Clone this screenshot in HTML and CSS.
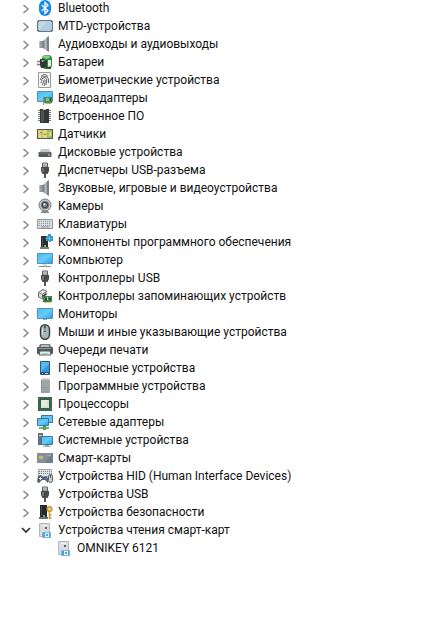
FILE: index.html
```html
<!DOCTYPE html>
<html lang="ru">
<head>
<meta charset="utf-8">
<meta name="viewport" content="width=device-width, initial-scale=1">
<title>Диспетчер устройств</title>
<link rel="stylesheet" href="styles.css">
</head>
<body>
<svg class="defs" aria-hidden="true">
  <defs>
    <linearGradient id="sky" x1="0" y1="0" x2="1" y2="1"><stop offset="0" stop-color="#4fb8ee"/><stop offset=".5" stop-color="#67cbfa"/><stop offset="1" stop-color="#2f9fe2"/></linearGradient>
    <linearGradient id="metal" x1="0" y1="0" x2="1" y2="0"><stop offset="0" stop-color="#666b6e"/><stop offset=".45" stop-color="#b9bdbf"/><stop offset="1" stop-color="#8b9094"/></linearGradient>
    <symbol id="closed" viewBox="0 0 8 12"><path d="M1.500 2l4.500 4-4.500 4" fill="none" stroke="#8b8b8b" stroke-width="1.600"/></symbol>
    <symbol id="open" viewBox="0 0 10 8"><path d="M1 2l4 4 4-4" fill="none" stroke="#333" stroke-width="1.700"/></symbol>
    <symbol id="speaker" viewBox="0 0 16 16"><path d="M2.500 5H6v7H2.500z" fill="#85898d"/><path d="M6 5l5-4.500v15L6 12z" fill="url(#metal)"/><path d="M10 1.500L12 0v16l-2-1.500z" fill="#7c8185"/><path d="M4 5.500v6" stroke="#b5b8ba"/></symbol>
    <symbol id="usb" viewBox="0 0 16 16"><path d="M5.500 1h5v4h-5z" fill="#dedede" stroke="#606060"/><path d="M7 2.500v1m2-1v1" stroke="#444"/><path d="M4 5h8v4l-1.500 3h-5L4 9z" fill="#47494b"/><path d="M5 6h2v4H5z" fill="#707375"/><path d="M7 11h2v5H7z" fill="#555"/></symbol>
    <symbol id="reader" viewBox="0 0 16 16"><path d="M2.500 1.500h10v13h-10z" fill="#d9dde0" stroke="#b2b8bc"/><path d="M5 3.500h5" stroke="#f2f4f5"/><path d="M8 5h2v2H8z" fill="#59636a"/><path d="M5.500 10.500h8v5h-8z" fill="#4b9fda" stroke="#78b7e2"/><path d="M8 11h4v4H8z" fill="#eef7fc"/><path d="M9 12h2v2H9z" fill="#4b9fda"/></symbol>
  </defs>
</svg>
<main>
<ul class="tree">
  <li><div class="row"><button class="toggle" aria-label="Развернуть"><svg class="chevron"><use href="#closed"/></svg></button><svg class="icon" viewBox="0 0 16 16"><rect x="2" y="0" width="12" height="16" rx="6" fill="#1689e7"/><path d="M4.700 5l6.300 5.700L8 13.500v-11L11 5.300 4.700 11" fill="none" stroke="#fff" stroke-width="1.300"/></svg><span>Bluetooth</span></div></li>
  <li><div class="row"><button class="toggle" aria-label="Развернуть"><svg class="chevron"><use href="#closed"/></svg></button><svg class="icon" viewBox="0 0 16 16"><rect x=".5" y="2.500" width="15" height="11" rx="1" fill="#b4cee0" stroke="#687986"/><path d="M2 4h8L3 11H2z" fill="#c5dae8"/><path d="M1 3.500h1m12 0h1M1 12.500h1m12 0h1" stroke="#34424b"/></svg><span>MTD-устройства</span></div></li>
  <li><div class="row"><button class="toggle" aria-label="Развернуть"><svg class="chevron"><use href="#closed"/></svg></button><svg class="icon"><use href="#speaker"/></svg><span>Аудиовходы и аудиовыходы</span></div></li>
  <li><div class="row"><button class="toggle" aria-label="Развернуть"><svg class="chevron"><use href="#closed"/></svg></button><svg class="icon" viewBox="0 0 16 16"><rect x="5" y="1" width="10" height="14" rx="4" fill="#2f8a40"/><ellipse cx="9.500" cy="3" rx="3.500" ry="1.700" fill="#8cd284"/><path d="M11 6h3v6l-3 1z" fill="#dff0dc"/><path d="M0 7.500h4M0 10.500h4" stroke="#777e7a" stroke-width="1.300"/><path d="M3 5h4l3 2v4l-3 3H4l-1-3z" fill="#303633"/><path d="M4 6h3l1 1-3 1z" fill="#969e99"/><path d="M8 12l3 2h3" fill="none" stroke="#303633" stroke-width="1.500"/></svg><span>Батареи</span></div></li>
  <li><div class="row"><button class="toggle" aria-label="Развернуть"><svg class="chevron"><use href="#closed"/></svg></button><svg class="icon" viewBox="0 0 16 16"><path d="M1.500.5h12v15h-12z" fill="#f5f5f5" stroke="#9a9a9a"/><g fill="none" stroke="#565656" stroke-width=".9"><path d="M4 4.500q3.500-4 7 0M3.500 8c0-5 8-5 8 0v3M4 11c1.500-2 0-4 2-5 2-1 4 0 3.700 3L9 13M5 13c2-2 1-5 2.500-5S8 11 7 14"/></g></svg><span>Биометрические устройства</span></div></li>
  <li><div class="row"><button class="toggle" aria-label="Развернуть"><svg class="chevron"><use href="#closed"/></svg></button><svg class="icon" viewBox="0 0 16 16"><path d="M.5 1.500h15v10H.5z" fill="url(#sky)" stroke="#4a96c0"/><path d="M6 6h1v9H6z" fill="#8b9496"/><path d="M7 7h8v6H7z" fill="#438c58"/><path d="M9 8h3v3H9z" fill="#8fbd91"/><path d="M8 13h6v1H8z" fill="#d3b852"/><path d="M13 8h1v3h-1z" fill="#205334"/></svg><span>Видеоадаптеры</span></div></li>
  <li><div class="row"><button class="toggle" aria-label="Развернуть"><svg class="chevron"><use href="#closed"/></svg></button><svg class="icon" viewBox="0 0 16 16"><path d="M1 2.500h13M1 4.500h13M1 6.500h13M1 8.500h13M1 10.500h13M1 12.500h13" stroke="#777"/><path d="M3 1h9v14H3z" fill="#363838"/><path d="M4 2h3v12H4z" fill="#505353"/><path d="M6 1h3v1H6z" fill="#ccc"/></svg><span>Встроенное ПО</span></div></li>
  <li><div class="row"><button class="toggle" aria-label="Развернуть"><svg class="chevron"><use href="#closed"/></svg></button><svg class="icon" viewBox="0 0 16 16"><path d="M0 3h16v10H0z" fill="#535746"/><path d="M1 4h9v8H1z" fill="#d8dc83"/><path d="M1 8h9M5 4v8" stroke="#c5b56a"/><path d="M3 6h2v1H3zM7 8h2v1H7z" fill="#d56c46"/><path d="M10 4h5v8h-5z" fill="#a3bd62"/><path d="M12 6h2v4h-2z" fill="#d8d997"/></svg><span>Датчики</span></div></li>
  <li><div class="row"><button class="toggle" aria-label="Развернуть"><svg class="chevron"><use href="#closed"/></svg></button><svg class="icon" viewBox="0 0 16 16"><path d="M4 5h8l2 4H2z" fill="#c4c6c8"/><rect x="1.500" y="8" width="13" height="5" rx="1" fill="#555a5d"/><path d="M3 9h10" stroke="#747a7d"/><path d="M11 11h2" stroke="#d7dadb"/></svg><span>Дисковые устройства</span></div></li>
  <li><div class="row"><button class="toggle" aria-label="Развернуть"><svg class="chevron"><use href="#closed"/></svg></button><svg class="icon"><use href="#usb"/></svg><span>Диспетчеры USB-разъема</span></div></li>
  <li><div class="row"><button class="toggle" aria-label="Развернуть"><svg class="chevron"><use href="#closed"/></svg></button><svg class="icon"><use href="#speaker"/></svg><span>Звуковые, игровые и видеоустройства</span></div></li>
  <li><div class="row"><button class="toggle" aria-label="Развернуть"><svg class="chevron"><use href="#closed"/></svg></button><svg class="icon" viewBox="0 0 16 16"><path d="M4 14l3-2h2l3 2v1H4z" fill="#85898c"/><circle cx="8" cy="7" r="6" fill="#c3c6c8" stroke="#777b7e"/><circle cx="8" cy="7" r="3.700" fill="#3f4346" stroke="#747779"/><circle cx="8" cy="7" r="2" fill="#8a9196"/><circle cx="7.300" cy="6.300" r="1" fill="#e9eef1"/></svg><span>Камеры</span></div></li>
  <li><div class="row"><button class="toggle" aria-label="Развернуть"><svg class="chevron"><use href="#closed"/></svg></button><svg class="icon" viewBox="0 0 16 16"><path d="M.5 3.500h15v9H.5z" fill="#d9dde0" stroke="#92989d"/><path d="M2 5.500h12M2 7.500h12M2 9.500h12" stroke="#8b9095" stroke-dasharray="1 1"/><path d="M4 11h8" stroke="#8b9095"/></svg><span>Клавиатуры</span></div></li>
  <li><div class="row"><button class="toggle" aria-label="Развернуть"><svg class="chevron"><use href="#closed"/></svg></button><svg class="icon" viewBox="0 0 16 16"><path d="M4 2h7v12H4z" fill="#292d30"/><path d="M5 3h1v10H5z" fill="#4a4f52"/><path d="M3 13h9v2H3z" fill="#777b7e"/><path d="M7 11h2v2H7z" fill="#5dcb55"/><path d="M9 2h2V0h3v2h2v5h-2v1h-2V7H9V5H8V4h1z" fill="#329bcb"/><path d="M10 4.500h5M12.500 2v5" stroke="#61b9df"/></svg><span>Компоненты программного обеспечения</span></div></li>
  <li><div class="row"><button class="toggle" aria-label="Развернуть"><svg class="chevron"><use href="#closed"/></svg></button><svg class="icon" viewBox="0 0 16 16"><path d="M.5 1.500h15v10H.5z" fill="url(#sky)" stroke="#4a96c0"/><path d="M6 12h4v2H6z" fill="#dce1e4"/><path d="M2 14.500h12" stroke="#8a9297"/></svg><span>Компьютер</span></div></li>
  <li><div class="row"><button class="toggle" aria-label="Развернуть"><svg class="chevron"><use href="#closed"/></svg></button><svg class="icon"><use href="#usb"/></svg><span>Контроллеры USB</span></div></li>
  <li><div class="row"><button class="toggle" aria-label="Развернуть"><svg class="chevron"><use href="#closed"/></svg></button><svg class="icon" viewBox="0 0 16 16"><path d="M1.500 4.500L6 1.500l4 2-5 3z" fill="#e7e9e7" stroke="#606560"/><path d="M1.500 5v4l4 2V7" fill="#ddd" stroke="#606560"/><path d="M5 8l4-3 1 1-3 3z" fill="#303530"/><path d="M6 8h9v6H6z" fill="#428657"/><path d="M8 10h2v3H8zM12 10h2v2h-2z" fill="#234d35"/><path d="M5 10v4M7 14.500h7" stroke="#dac66e"/><path d="M10 9h1v3h-1z" fill="#c2d7bd"/></svg><span>Контроллеры запоминающих устройств</span></div></li>
  <li><div class="row"><button class="toggle" aria-label="Развернуть"><svg class="chevron"><use href="#closed"/></svg></button><svg class="icon" viewBox="0 0 16 16"><path d="M.5 2.500h15v10H.5z" fill="url(#sky)" stroke="#4a96c0"/><path d="M6 13.500h4" stroke="#9aa8b0"/></svg><span>Мониторы</span></div></li>
  <li><div class="row"><button class="toggle" aria-label="Развернуть"><svg class="chevron"><use href="#closed"/></svg></button><svg class="icon" viewBox="0 0 16 16"><rect x="3.500" y=".7" width="9" height="14.600" rx="4.500" fill="#a9b3b8" stroke="#343b40" stroke-width="1.400"/><path d="M5.500 4v7" stroke="#d5dce0"/><path d="M8 2v6" stroke="#555d62" stroke-width="2"/><path d="M8 4v3" stroke="#c7d0d5"/></svg><span>Мыши и иные указывающие устройства</span></div></li>
  <li><div class="row"><button class="toggle" aria-label="Развернуть"><svg class="chevron"><use href="#closed"/></svg></button><svg class="icon" viewBox="0 0 16 16"><path d="M3 2h10l2 5H1z" fill="#767b7c"/><path d="M4 3h8v3H4z" fill="#b8bbbb"/><rect y="5" width="16" height="7" rx="1" fill="#50595a"/><path d="M2 6.500h12" stroke="#929999"/><path d="M3 9h10l1 4H2z" fill="#e5eee9" stroke="#52655d"/><path d="M5 11.500h6" stroke="#a5cbb6"/></svg><span>Очереди печати</span></div></li>
  <li><div class="row"><button class="toggle" aria-label="Развернуть"><svg class="chevron"><use href="#closed"/></svg></button><svg class="icon" viewBox="0 0 16 16"><rect x="3" y="1" width="10" height="14" rx="1" fill="#34556d"/><path d="M4 2h8v10H4z" fill="#55b8ef"/><path d="M4 12l8-8v8z" fill="#2d98e3"/><path d="M5 13.500h1m2 0h3" stroke="#c5d5df"/></svg><span>Переносные устройства</span></div></li>
  <li><div class="row"><button class="toggle" aria-label="Развернуть"><svg class="chevron"><use href="#closed"/></svg></button><svg class="icon" viewBox="0 0 16 16"><path d="M4 2l2-2h5l2 2v13H4z" fill="#a0a5a8"/><path d="M4 2l2-2h5l2 2z" fill="#c9ccce"/><path d="M4 2h1v13H4z" fill="#8d9295"/><path d="M10 4h1v1h-1z" fill="#62ae80"/><path d="M6 9.500h5m-5 2h5m-5 2h5" stroke="#969c9f"/></svg><span>Программные устройства</span></div></li>
  <li><div class="row"><button class="toggle" aria-label="Развернуть"><svg class="chevron"><use href="#closed"/></svg></button><svg class="icon" viewBox="0 0 16 16"><path d="M1 1h14v14H1z" fill="#315e43"/><rect x="2" y="2" width="12" height="12" fill="none" stroke="#5f8669" stroke-width="1" stroke-dasharray="1 1"/><path d="M4 4h8v8H4z" fill="#e6e9df"/><path d="M5 11h6V5" fill="none" stroke="#cbd2c6"/></svg><span>Процессоры</span></div></li>
  <li><div class="row"><button class="toggle" aria-label="Развернуть"><svg class="chevron"><use href="#closed"/></svg></button><svg class="icon" viewBox="0 0 16 16"><path d="M4.500 1.500h11v7h-11z" fill="#68c5f1" stroke="#34779d"/><path d="M.5 4.500h11v7H.5z" fill="url(#sky)" stroke="#34779d"/><path d="M6 12h3v1H6z" fill="#559069"/><path d="M2 14h10" stroke="#62bd69" stroke-width="2"/><path d="M6 13h3v3H6z" fill="#4ca957"/></svg><span>Сетевые адаптеры</span></div></li>
  <li><div class="row"><button class="toggle" aria-label="Развернуть"><svg class="chevron"><use href="#closed"/></svg></button><svg class="icon" viewBox="0 0 16 16"><path d="M1 1h5v12H1z" fill="#686e72"/><path d="M2 3.500h3" stroke="#d0d4d6"/><path d="M4.500 4.500h11v8h-11z" fill="url(#sky)" stroke="#367da9"/><path d="M8 13h4v1H8z" fill="#8e979c"/><path d="M6 14.500h8" stroke="#b4bbc0"/></svg><span>Системные устройства</span></div></li>
  <li><div class="row"><button class="toggle" aria-label="Развернуть"><svg class="chevron"><use href="#closed"/></svg></button><svg class="icon" viewBox="0 0 16 16"><path d="M0 3h16v10H0z" fill="#718089"/><path d="M0 3h16L7 13H0z" fill="#83919a"/><path d="M2 6h4v3H2z" fill="#d2b55e"/><path d="M10 5.500h4" stroke="#9eabb3"/></svg><span>Смарт-карты</span></div></li>
  <li><div class="row"><button class="toggle" aria-label="Развернуть"><svg class="chevron"><use href="#closed"/></svg></button><svg class="icon" viewBox="0 0 16 16"><path d="M1.500 1.500h13v7h-13z" fill="#e0e3e5" stroke="#a4a9ad"/><path d="M2 3.500h12M2 5.500h12" stroke="#777f84" stroke-dasharray="1 1"/><path d="M0 14l1-6 3-1 2 2h1l2-1 2 2v5l-3-3H5l-3 3z" fill="#56636f"/><path d="M2 10.500h3M3.500 9v3" stroke="#d8e1e6"/><path d="M8 10h2v1H8z" fill="#6379d0"/><rect x="11.500" y="6.500" width="4" height="8" rx="2" fill="#cbd1d4" stroke="#555f66"/><path d="M13.500 7v3" stroke="#555f66"/></svg><span>Устройства HID (Human Interface Devices)</span></div></li>
  <li><div class="row"><button class="toggle" aria-label="Развернуть"><svg class="chevron"><use href="#closed"/></svg></button><svg class="icon"><use href="#usb"/></svg><span>Устройства USB</span></div></li>
  <li><div class="row"><button class="toggle" aria-label="Развернуть"><svg class="chevron"><use href="#closed"/></svg></button><svg class="icon" viewBox="0 0 16 16"><path d="M3 1h7v12H3z" fill="#24292b"/><path d="M4 2h1v10H4z" fill="#444a4d"/><path d="M2 13h9v2H2z" fill="#697074"/><path d="M6 11h2v2H6z" fill="#55bc5c"/><path d="M12.500 6v9m0-4h2m-2 3h2" stroke="#c99a38" stroke-width="1.600"/><circle cx="12.500" cy="5" r="2.300" fill="#f3da79" stroke="#c79835" stroke-width="1.600"/></svg><span>Устройства безопасности</span></div></li>
  <li>
    <div class="row"><button class="toggle" aria-label="Свернуть" aria-expanded="true"><svg class="chevron-open"><use href="#open"/></svg></button><svg class="icon"><use href="#reader"/></svg><span>Устройства чтения смарт-карт</span></div>
    <ul class="children"><li><div class="row"><svg class="icon"><use href="#reader"/></svg><span>OMNIKEY 6121</span></div></li></ul>
  </li>
</ul>
</main>
</body>
</html>
```
FILE: styles.css
```css
* { box-sizing: border-box; }
body {
  margin: 0;
  background: #fff;
  color: #111;
  font: 12px/18px Roboto, "Noto Sans", sans-serif;
}
main { overflow: hidden; }
.defs { position: absolute; width: 0; height: 0; }
.tree, .children { margin: 0; padding: 0; list-style: none; }
.tree { margin-top: -1px; padding-left: 19px; }
.children { padding-left: 37px; }
.row {
  display: flex;
  align-items: center;
  height: 18px;
  white-space: nowrap;
}
.toggle {
  display: flex;
  align-items: center;
  justify-content: center;
  width: 14px;
  height: 18px;
  margin-right: 4px;
  padding: 0;
  border: 0;
  background: none;
}
.chevron { width: 8px; height: 12px; margin-top: 2px; }
.chevron-open { width: 10px; height: 8px; }
.icon { flex: none; width: 16px; height: 16px; margin-right: 5px; }
```
